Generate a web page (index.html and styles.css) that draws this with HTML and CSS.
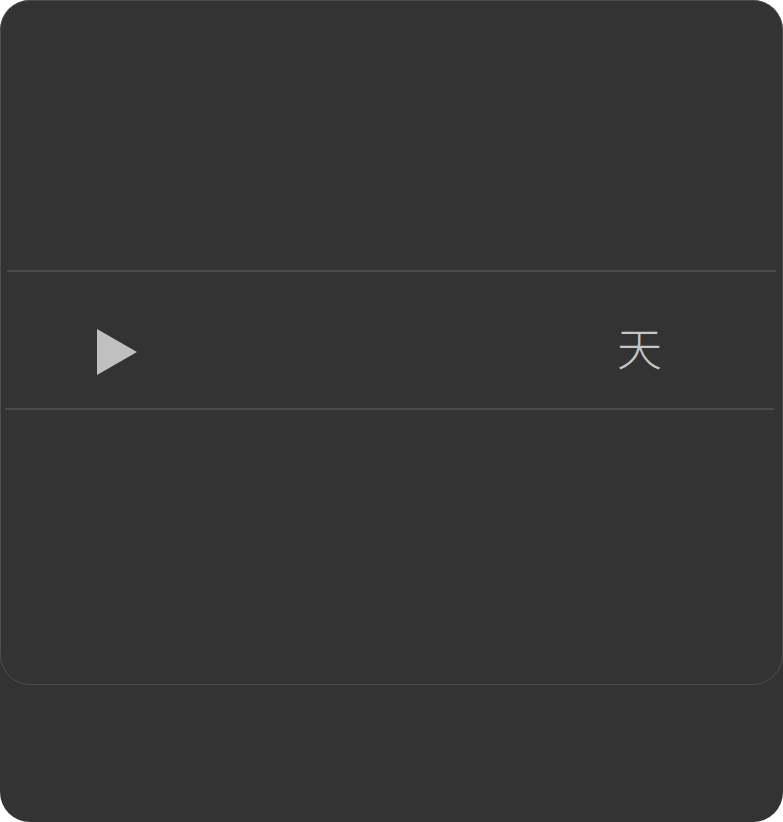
FILE: index.html
```html
<!DOCTYPE html>
<html lang="zh">
<head>
<meta charset="utf-8">
<link rel="stylesheet" href="styles.css">
</head>
<body>
<div class="frame">
  <div class="card">
    <div class="top"></div>
    <div class="line line-a"></div>
    <div class="row">
      <svg class="play" width="40" height="46" viewBox="0 0 40 46"><polygon points="0,0 40,23 0,46" fill="#c0c0c0"/></svg>
      <span class="glyph">天</span>
    </div>
    <div class="line line-b"></div>
  </div>
</div>
</body>
</html>
```
FILE: styles.css
```css
html, body { margin: 0; padding: 0; background: #ffffff; }
.frame {
  width: 783px;
  height: 822px;
  background: #333333;
  border-radius: 30px;
  overflow: hidden;
}
.card {
  box-sizing: border-box;
  height: 685px;
  border: 1px solid #4d4d4d;
  border-radius: 30px;
  display: flex;
  flex-direction: column;
}
.top { height: 269px; flex: none; }
.line { height: 2px; background: #4a4a4a; flex: none; }
.line-a { margin: 0 6px 0 6px; }
.line-b { margin: 0 8px 0 4px; }
.row {
  height: 136px;
  flex: none;
  display: flex;
  align-items: flex-start;
  justify-content: space-between;
  padding: 0 120px 0 96px;
}
.play { display: block; margin-top: 57px; }
.glyph {
  font-family: "Noto Sans CJK SC", sans-serif;
  font-size: 45px;
  line-height: 1;
  color: #c6c6c6;
  font-weight: 300;
  margin-top: 52px;
}
```
